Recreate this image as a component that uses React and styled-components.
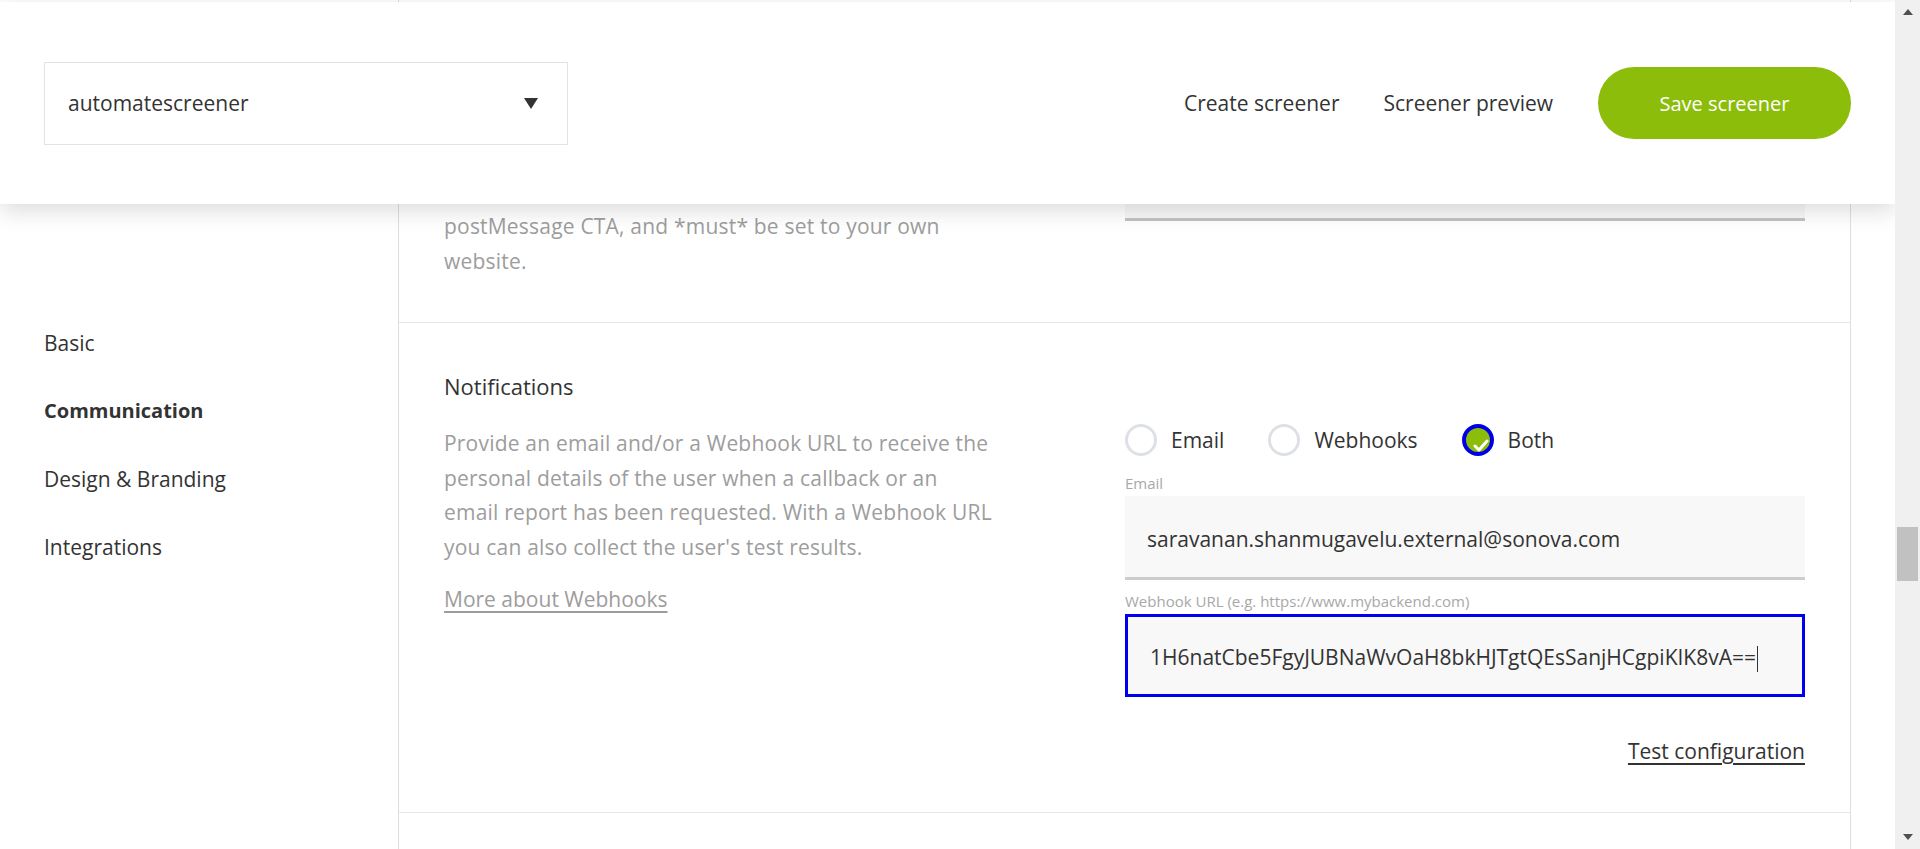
import styled, { createGlobalStyle } from "styled-components";

const GlobalStyle = createGlobalStyle`
  html, body {
    margin: 0;
    height: 100%;
    overflow: hidden;
  }
  body {
    font-family: "Open Sans", "Liberation Sans", sans-serif;
    color: #333;
    background: #fff;
  }
  * {
    box-sizing: border-box;
  }
`;

const Viewport = styled.div`
  display: flex;
  height: 100vh;
`;

const Page = styled.div`
  flex: 1;
  position: relative;
  overflow: hidden;
`;

const Header = styled.header`
  position: absolute;
  top: 2px;
  left: 0;
  right: 0;
  height: 202px;
  background: #fff;
  box-shadow: 0 6px 22px rgba(0, 0, 0, 0.15);
  z-index: 10;
  display: flex;
  align-items: center;
  justify-content: space-between;
  padding: 0 44px;
`;

const Select = styled.div`
  width: 524px;
  height: 83px;
  border: 1px solid #e3e3e3;
  display: flex;
  align-items: center;
  justify-content: space-between;
  padding: 0 29px 0 23px;
  font-size: 21px;
`;

const Caret = styled.span`
  width: 0;
  height: 0;
  border-left: 7px solid transparent;
  border-right: 7px solid transparent;
  border-top: 11px solid #333;
`;

const Nav = styled.nav`
  display: flex;
  align-items: center;
  gap: 44px;
`;

const NavLink = styled.a`
  font-size: 21px;
  color: #333;
  text-decoration: none;
`;

const SaveButton = styled.button`
  margin-left: 1px;
  width: 253px;
  height: 72px;
  border: none;
  border-radius: 36px;
  background: #8cbd0b;
  color: #fff;
  font-family: inherit;
  font-size: 20px;
`;

const Body = styled.div`
  display: flex;
  height: 100%;
`;

const Sidebar = styled.nav`
  width: 398px;
  flex-shrink: 0;
  padding: 309px 0 0 44px;
  display: flex;
  flex-direction: column;
`;

const SideItem = styled.div`
  font-size: ${(p) => (p.active ? 20 : 21)}px;
  line-height: 34px;
  padding: 17px 0;
  font-weight: ${(p) => (p.active ? 700 : 400)};
  color: #333;
`;

const Content = styled.main`
  width: 1453px;
  flex-shrink: 0;
  border-left: 1px solid #dedede;
  border-right: 1px solid #dedede;
`;

const Section = styled.section`
  display: grid;
  grid-template-columns: 1fr 680px;
  column-gap: 20px;
  padding: ${(p) => p.pad || "46px 45px 44px"};
  height: ${(p) => p.h || "auto"};
  border-bottom: ${(p) => (p.last ? "none" : "1px solid #e6e6e6")};
`;

const Column = styled.div`
  display: flex;
  flex-direction: column;
  padding-top: ${(p) => p.top || 0}px;
`;

const Heading = styled.h3`
  margin: 0;
  font-size: 22px;
  line-height: 34px;
  font-weight: 400;
  color: #333;
`;

const Desc = styled.p`
  margin: ${(p) => p.mt || 23}px 0 0;
  max-width: 600px;
  font-size: 21px;
  letter-spacing: 0.2px;
  line-height: 34.5px;
  color: #9d9d9d;
`;

const MoreLink = styled.a`
  margin-top: 18px;
  align-self: flex-start;
  font-size: 21px;
  line-height: 34px;
  color: #9d9d9d;
  text-decoration: underline;
  text-decoration-thickness: 2px;
  text-underline-offset: 4px;
`;

const RadioRow = styled.div`
  display: flex;
  align-items: center;
  gap: 44px;
  margin-top: 54px;
  height: 34px;
`;

const RadioItem = styled.label`
  display: flex;
  align-items: center;
  gap: 14px;
  font-size: 21px;
  color: #333;
`;

const Circle = styled.span`
  width: 32px;
  height: 32px;
  border-radius: 50%;
  border: ${(p) => (p.checked ? "4px solid #0000e6" : "3px solid #dde1e6")};
  background: ${(p) => (p.checked ? "#8cbd0b" : "#fff")};
  display: flex;
  align-items: flex-end;
  justify-content: flex-end;
  overflow: hidden;
`;

const FieldLabel = styled.div`
  margin-top: ${(p) => p.mt}px;
  font-size: 15px;
  line-height: 18px;
  color: #a8a8a8;
`;

const Field = styled.div`
  margin-top: 4px;
  height: ${(p) => (p.focused ? 83 : 84)}px;
  background: #f8f8f8;
  border: ${(p) => (p.focused ? "3px solid #0000f0" : "none")};
  border-bottom: 3px solid ${(p) => (p.focused ? "#0000f0" : p.shade ? "#c2c2c2" : "#cccccc")};
  display: flex;
  align-items: center;
  padding: 4px 0 0 22px;
  font-size: 21px;
  color: #333;
  white-space: nowrap;
  overflow: hidden;
`;

const TextCaret = styled.span`
  display: inline-block;
  width: 1px;
  height: 26px;
  margin-left: 1px;
  background: #333;
  vertical-align: middle;
`;

const TestLink = styled.a`
  margin-top: 37px;
  align-self: flex-end;
  font-size: 21px;
  line-height: 34px;
  color: #333;
  text-decoration: underline;
  text-underline-offset: 4px;
`;

const Gutter = styled.div`
  flex: 1;
`;

const Scrollbar = styled.div`
  width: 25px;
  flex-shrink: 0;
  background: #f0f0f0;
  display: flex;
  flex-direction: column;
  align-items: center;
  justify-content: space-between;
  padding: 9px 0 9px;
`;

const Arrow = styled.span`
  width: 0;
  height: 0;
  border-left: 5px solid transparent;
  border-right: 5px solid transparent;
  ${(p) => (p.up ? "border-bottom: 6px solid #505050;" : "border-top: 6px solid #505050;")}
`;

const Track = styled.div`
  flex: 1;
  width: 100%;
  display: flex;
  justify-content: center;
`;

const Thumb = styled.div`
  width: 21px;
  height: 54px;
  background: #c1c1c1;
`;

const Check = () => (
  <svg width="18" height="16" viewBox="0 0 18 16" style={{ marginRight: 0, marginBottom: -1 }}>
    <path d="M3 9 L7 13 L15 4" fill="none" stroke="#fff" strokeWidth="3" strokeLinecap="round" strokeLinejoin="round" />
  </svg>
);

const Radio = ({ label, checked }) => (
  <RadioItem>
    <Circle checked={checked}>{checked && <Check />}</Circle>
    {label}
  </RadioItem>
);

export default function App() {
  return (
    <Viewport>
      <GlobalStyle />
      <Page>
        <Header>
          <Select>
            automatescreener
            <Caret />
          </Select>
          <Nav>
            <NavLink>Create screener</NavLink>
            <NavLink>Screener preview</NavLink>
            <SaveButton>Save screener</SaveButton>
          </Nav>
        </Header>
        <Body>
          <Sidebar>
            <SideItem>Basic</SideItem>
            <SideItem active>Communication</SideItem>
            <SideItem>Design &amp; Branding</SideItem>
            <SideItem>Integrations</SideItem>
          </Sidebar>
          <Content>
            <Section pad="0 45px" h="323px">
              <Column>
                <Desc mt={209}>
                  postMessage CTA, and *must* be set to your own
                  <br />
                  website.
                </Desc>
              </Column>
              <Column top={133}>
                <Field shade />
              </Column>
            </Section>
            <Section>
              <Column>
                <Heading>Notifications</Heading>
                <Desc>
                  Provide an email and/or a Webhook URL to receive the
                  <br />
                  personal details of the user when a callback or an
                  <br />
                  email report has been requested. With a Webhook URL
                  <br />
                  you can also collect the user's test results.
                </Desc>
                <MoreLink>More about Webhooks</MoreLink>
              </Column>
              <Column>
                <RadioRow>
                  <Radio label="Email" />
                  <Radio label="Webhooks" />
                  <Radio label="Both" checked />
                </RadioRow>
                <FieldLabel mt={17}>Email</FieldLabel>
                <Field>saravanan.shanmugavelu.external@sonova.com</Field>
                <FieldLabel mt={12}>Webhook URL (e.g. https://www.mybackend.com)</FieldLabel>
                <Field focused>
                  <span>
                    1H6natCbe5FgyJUBNaWvOaH8bkHJTgtQEsSanjHCgpiKIK8vA==
                    <TextCaret />
                  </span>
                </Field>
                <TestLink>Test configuration</TestLink>
              </Column>
            </Section>
            <Section last pad="0" />
          </Content>
          <Gutter />
        </Body>
      </Page>
      <Scrollbar>
        <Arrow up />
        <Track>
          <Thumb style={{ marginTop: 512 }} />
        </Track>
        <Arrow />
      </Scrollbar>
    </Viewport>
  );
}
